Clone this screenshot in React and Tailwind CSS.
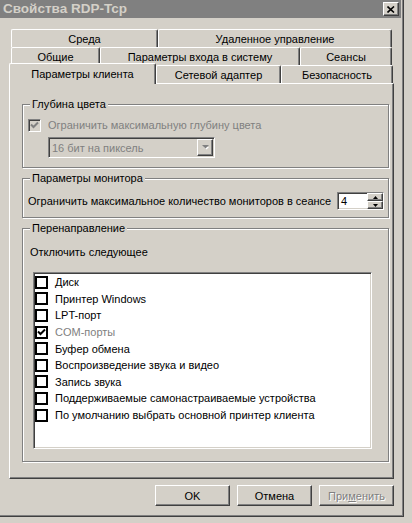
import React from "react";

const RAISED =
  "border border-t-white border-l-white border-r-[#404040] border-b-[#404040] shadow-[inset_-1px_-1px_#808080]";
const SUNKEN =
  "border border-t-[#808080] border-l-[#808080] border-r-white border-b-white shadow-[inset_1px_1px_#404040,inset_-1px_-1px_#d4d0c8]";
const TAB =
  "flex items-start justify-center pt-[2px] border-l border-t border-r border-l-white border-t-white border-r-[#404040] shadow-[inset_-1px_0_#808080] rounded-t-[2px] bg-[#d4d0c8]";

function Check({ color = "#000" }) {
  return (
    <svg width="9" height="9" viewBox="0 0 9 9" className="block">
      <path d="M1 3.5 L3.5 6 L8 1.5" fill="none" stroke={color} strokeWidth="2" />
    </svg>
  );
}

function Group({ title, className, children }) {
  return (
    <div
      className={
        "relative border border-[#808080] shadow-[inset_1px_1px_#fff,1px_1px_#fff] w-[367px] " +
        className
      }
    >
      <span className="absolute left-[7px] top-[-8px] bg-[#d4d0c8] px-[2px] leading-[14px]">
        {title}
      </span>
      {children}
    </div>
  );
}

const items = [
  { t: "Диск" },
  { t: "Принтер Windows" },
  { t: "LPT-порт" },
  { t: "COM-порты", on: true, off: true },
  { t: "Буфер обмена" },
  { t: "Воспроизведение звука и видео" },
  { t: "Запись звука" },
  { t: "Поддерживаемые самонастраиваемые устройства" },
  { t: "По умолчанию выбрать основной принтер клиента" },
];

function Tab({ w, children }) {
  return (
    <div className={TAB} style={{ width: w, height: 18 }}>
      <span className="leading-[14px]">{children}</span>
    </div>
  );
}

export default function App() {
  return (
    <div className="w-[412px] h-[523px] bg-[#d4d0c8] text-black text-[11px] font-['Liberation_Sans',Arial,sans-serif] overflow-hidden select-none">
      <div className="w-[404px] h-[517px] flex flex-col border-r border-b border-[#404040] shadow-[inset_-1px_-1px_#808080]">
        {/* caption */}
        <div className="w-[401px] h-[18px] bg-[#808080] flex items-center justify-between pl-[3px] pr-[2px]">
          <span className="font-bold text-[13.5px] text-[#d4d0c8] leading-[14px]">Свойства RDP-Tcp</span>
          <div className={"w-[16px] h-[14px] bg-[#d4d0c8] flex items-center justify-center " + RAISED}>
            <svg width="8" height="7" viewBox="0 0 8 7">
              <path d="M0.5 0.5 L7 6.5 M7 0.5 L0.5 6.5" stroke="#000" strokeWidth="1.6" />
            </svg>
          </div>
        </div>

        {/* tabs */}
        <div className="ml-[9px] mt-[11px] w-[385px] flex flex-col">
          <div className="flex ml-[2px] h-[18px]">
            <Tab w={147}>Среда</Tab>
            <Tab w={234}>Удаленное управление</Tab>
          </div>
          <div className="flex ml-[2px] h-[18px]">
            <Tab w={89}>Общие</Tab>
            <Tab w={200}>Параметры входа в систему</Tab>
            <Tab w={92}>Сеансы</Tab>
          </div>
          <div className="flex items-start h-[18px]">
            <div className={TAB + " relative z-10 w-[147px] h-[21px] -mt-[2px] pt-[3px]"}>
              <span className="leading-[14px]">Параметры клиента</span>
            </div>
            <Tab w={125}>Сетевой адаптер</Tab>
            <Tab w={112}>Безопасность</Tab>
          </div>

          {/* page */}
          <div className={"w-[385px] h-[396px] flex flex-col pl-[12px] pt-[20px] " + RAISED}>
            <Group title="Глубина цвета" className="h-[64px] pl-[5px] pt-[13px]">
              <div className="flex items-center gap-[7px]">
                <div className={"w-[13px] h-[13px] bg-[#d4d0c8] flex items-center justify-center " + SUNKEN}>
                  <Check color="#808080" />
                </div>
                <span className="text-[#808080] leading-[14px]">Ограничить максимальную глубину цвета</span>
              </div>
              <div className={"ml-[20px] mt-[5px] w-[167px] h-[21px] bg-[#d4d0c8] flex items-center justify-between pl-[2px] pr-[1px] " + SUNKEN}>
                <span className="text-[#808080] leading-[14px] pl-[1px]">16 бит на пиксель</span>
                <div className={"w-[16px] h-[17px] bg-[#d4d0c8] flex items-center justify-center " + RAISED}>
                  <svg width="7" height="5" viewBox="0 0 7 5" className="overflow-visible">
                    <path d="M1 1 L6 1 L3.5 3.5 Z" fill="#fff" transform="translate(1 1)" />
                    <path d="M0 0 L7 0 L3.5 3.5 Z" fill="#808080" />
                  </svg>
                </div>
              </div>
            </Group>

            <Group title="Параметры монитора" className="mt-[10px] h-[40px] pl-[5px] pt-[13px]">
              <div className="flex items-center">
                <span className="leading-[14px] w-[309px] whitespace-nowrap">
                  Ограничить максимальное количество мониторов в сеансе
                </span>
                <div className={"w-[47px] h-[18px] bg-white flex items-stretch " + SUNKEN}>
                  <span className="flex-1 pl-[3px] leading-[14px] pt-[1px]">4</span>
                  <div className="w-[16px] flex flex-col">
                    <div className={"flex-1 bg-[#d4d0c8] flex items-center justify-center " + RAISED}>
                      <svg width="5" height="3" viewBox="0 0 5 3"><path d="M2.5 0 L5 3 L0 3 Z" fill="#000" /></svg>
                    </div>
                    <div className={"flex-1 bg-[#d4d0c8] flex items-center justify-center " + RAISED}>
                      <svg width="5" height="3" viewBox="0 0 5 3"><path d="M0 0 L5 0 L2.5 3 Z" fill="#000" /></svg>
                    </div>
                  </div>
                </div>
              </div>
            </Group>

            <Group title="Перенаправление" className="mt-[10px] h-[234px] pt-[16px]">
              <div className="pl-[7px] leading-[14px]">Отключить следующее</div>
              <div className={"ml-[10px] mt-[13px] w-[339px] h-[177px] bg-white " + SUNKEN}>
                <div className="m-[1px] flex flex-col">
                  {items.map((it) => (
                    <div key={it.t} className="h-[16.6px] flex items-center gap-[7px]">
                      <div className="w-[13px] h-[13px] border-2 border-black bg-white flex items-center justify-center">
                        {it.on && <Check />}
                      </div>
                      <span className={"leading-[14px] whitespace-nowrap " + (it.off ? "text-[#808080]" : "")}>
                        {it.t}
                      </span>
                    </div>
                  ))}
                </div>
              </div>
            </Group>
          </div>

          {/* buttons */}
          <div className="mt-[6px] flex justify-end gap-[7px]">
            <div className={"w-[75px] h-[21px] flex items-center justify-center " + RAISED}>
              <span className="leading-[14px]">OK</span>
            </div>
            <div className={"w-[75px] h-[21px] flex items-center justify-center " + RAISED}>
              <span className="leading-[14px]">Отмена</span>
            </div>
            <div className={"w-[75px] h-[21px] flex items-center justify-center " + RAISED}>
              <span className="leading-[14px] text-[#808080] [text-shadow:1px_1px_#fff]">
                При<span className="underline">м</span>енить
              </span>
            </div>
          </div>
        </div>
      </div>
    </div>
  );
}
